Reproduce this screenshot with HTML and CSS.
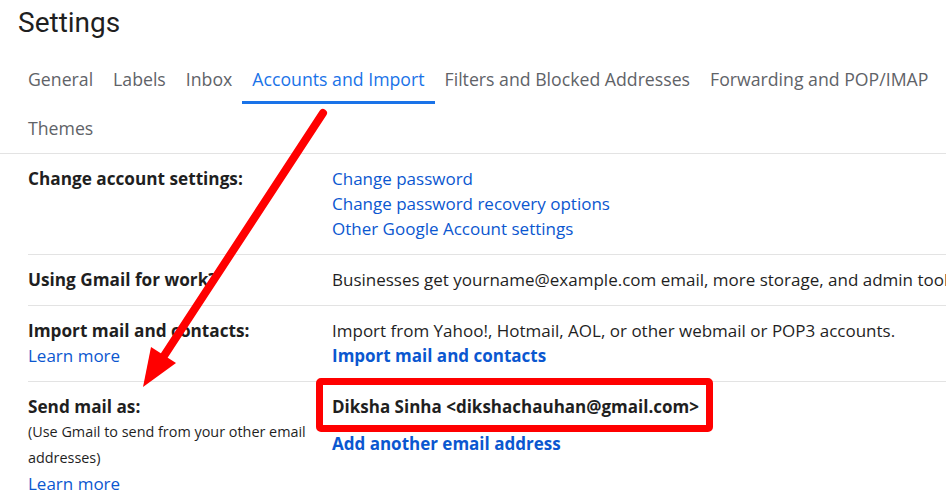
FILE: index.html
```html
<!DOCTYPE html>
<html lang="en">
<head>
<meta charset="utf-8">
<title>Settings</title>
<link rel="stylesheet" href="styles.css">
</head>
<body>
<div class="page">
  <h1 class="title">Settings</h1>
  <nav class="tabs">
    <a class="tab">General</a>
    <a class="tab">Labels</a>
    <a class="tab">Inbox</a>
    <a class="tab active">Accounts and Import</a>
    <a class="tab">Filters and Blocked Addresses</a>
    <a class="tab">Forwarding and POP/IMAP</a>
    <a class="tab">Themes</a>
  </nav>
  <div class="rows">
    <div class="row">
      <div class="label"><span class="strong">Change account settings:</span></div>
      <div class="value">
        <a class="link">Change password</a>
        <a class="link">Change password recovery options</a>
        <a class="link">Other Google Account settings</a>
      </div>
    </div>
    <div class="row">
      <div class="label"><span class="strong">Using Gmail for work?</span></div>
      <div class="value nowrap">Businesses get yourname@example.com email, more storage, and admin tools</div>
    </div>
    <div class="row row-import">
      <div class="label">
        <span class="strong">Import mail and contacts:</span>
        <a class="link">Learn more</a>
      </div>
      <div class="value">
        <span class="plain">Import from Yahoo!, Hotmail, AOL, or other webmail or POP3 accounts.</span>
        <a class="link bold">Import mail and contacts</a>
      </div>
    </div>
    <div class="row">
      <div class="label">
        <span class="strong">Send mail as:</span>
        <span class="hint">(Use Gmail to send from your other email addresses)</span>
        <a class="link">Learn more</a>
      </div>
      <div class="value">
        <span class="address">Diksha Sinha &lt;dikshachauhan@gmail.com&gt;</span>
        <a class="link bold add">Add another email address</a>
      </div>
    </div>
  </div>
  <div class="highlight"></div>
  <svg class="arrow" width="946" height="504" viewBox="0 0 946 504">
    <line x1="323" y1="113" x2="160" y2="362" stroke="#ff0000" stroke-width="8" stroke-linecap="round"/>
    <polygon points="143,387 151,347 176,363" fill="#ff0000"/>
  </svg>
</div>
</body>
</html>
```
FILE: styles.css
```css
* { box-sizing: border-box; }
html, body {
  margin: 0;
  padding: 0;
  background: #ffffff;
}
body {
  width: 946px;
  height: 504px;
  overflow: hidden;
  font-family: "Open Sans", "Liberation Sans", Arial, sans-serif;
  color: #1f1f1f;
}
.page {
  position: relative;
  width: 946px;
  height: 504px;
}
.title {
  margin: 0;
  padding: 9px 0 0 18px;
  height: 54px;
  font-family: Roboto, "Liberation Sans", Arial, sans-serif;
  font-size: 28px;
  line-height: 28px;
  font-weight: 400;
  color: #1f1f1f;
}
.tabs {
  display: flex;
  flex-wrap: wrap;
  padding-left: 18px;
  border-bottom: 1px solid #e3e3e3;
}
.tab {
  display: flex;
  align-items: center;
  height: 50px;
  padding: 2px 10px 0;
  font-size: 17.7px;
  color: #5f6368;
  border-bottom: 3px solid transparent;
  white-space: nowrap;
}
.tab.active {
  color: #1a73e8;
  border-bottom-color: #1a73e8;
}
.tabs .tab:last-child {
  height: 49px;
}
.rows {
  margin-left: 28px;
}
.row {
  display: grid;
  grid-template-columns: 304px 1fr;
  padding: 12px 0 13px;
  border-top: 1px solid #e3e3e3;
  font-size: 17px;
  line-height: 25px;
}
.row:first-child {
  border-top: none;
}
.label, .value {
  display: flex;
  flex-direction: column;
  align-items: flex-start;
}
.strong {
  font-weight: 700;
  font-size: 17.2px;
  color: #1f1f1f;
}
.link {
  color: #0b57d0;
}
.link.bold {
  font-weight: 700;
  font-size: 17px;
}
.nowrap {
  white-space: nowrap;
}
.hint {
  font-size: 14.4px;
  line-height: 26px;
  color: #1f1f1f;
  width: 300px;
}
.address {
  font-weight: 700;
  font-size: 17px;
}
.add {
  margin-top: 12px;
}
.highlight {
  position: absolute;
  left: 316px;
  top: 378px;
  width: 397px;
  height: 54px;
  border: 7px solid #ff0000;
  border-radius: 5px;
}
.arrow {
  position: absolute;
  left: 0;
  top: 0;
  pointer-events: none;
}
```
